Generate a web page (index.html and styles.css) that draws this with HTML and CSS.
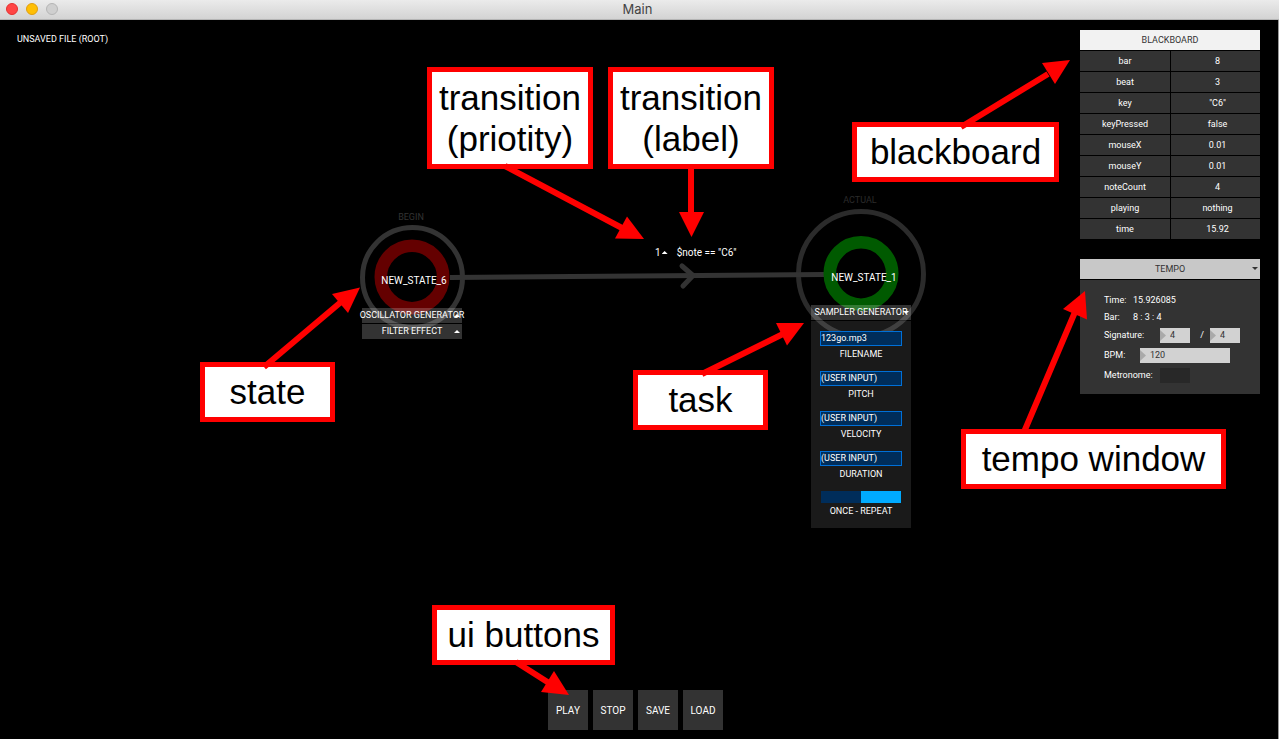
FILE: index.html
```html
<!DOCTYPE html>
<html lang="en">
<head>
<meta charset="utf-8">
<title>Main</title>
<link rel="stylesheet" href="styles.css">
</head>
<body>
<header class="titlebar">
  <div class="lights">
    <button class="light light-close" aria-label="Close"></button>
    <button class="light light-minimize" aria-label="Minimize"></button>
    <button class="light light-zoom" aria-label="Zoom"></button>
  </div>
  <h1 class="window-title">Main</h1>
</header>

<svg class="layer graph" aria-hidden="true">
  <circle cx="412.5" cy="277.5" r="50" fill="none" stroke="#333" stroke-width="5"/>
  <circle cx="861" cy="274" r="62.5" fill="none" stroke="#2b2b2b" stroke-width="5"/>
  <path d="M450 277.5L824 274.5" stroke="#333" stroke-width="5"/>
  <path d="M682 266L693 275.500L683 286" fill="none" stroke="#333" stroke-width="5" stroke-linecap="round" stroke-linejoin="round"/>
  <circle cx="412" cy="277" r="31.2" fill="none" stroke="#640000" stroke-width="12.600"/>
  <circle cx="861" cy="273.500" r="31.2" fill="none" stroke="#005a00" stroke-width="12.600"/>
</svg>

<main class="workspace">
  <div class="top">
    <p class="file-name">UNSAVED FILE (ROOT)</p>
    <aside class="sidebar">
      <section class="blackboard">
        <h2 class="panel-title panel-title-light">BLACKBOARD</h2>
        <table class="variables">
          <tbody>
            <tr><th scope="row">bar</th><td>8</td></tr>
            <tr><th scope="row">beat</th><td>3</td></tr>
            <tr><th scope="row">key</th><td>"C6"</td></tr>
            <tr><th scope="row">keyPressed</th><td>false</td></tr>
            <tr><th scope="row">mouseX</th><td>0.01</td></tr>
            <tr><th scope="row">mouseY</th><td>0.01</td></tr>
            <tr><th scope="row">noteCount</th><td>4</td></tr>
            <tr><th scope="row">playing</th><td>nothing</td></tr>
            <tr><th scope="row">time</th><td>15.92</td></tr>
          </tbody>
        </table>
      </section>
      <section class="tempo">
        <button class="panel-title panel-title-gray" aria-expanded="true">TEMPO<span class="caret caret-down caret-dark"></span></button>
        <div class="tempo-body">
          <dl class="readout">
            <dt>Time:</dt><dd>15.926085</dd>
            <dt>Bar:</dt><dd>8 : 3 : 4</dd>
          </dl>
          <div class="field">
            <label class="label-wide" for="beats">Signature:</label>
            <span class="number"><input id="beats" type="text" value="4"></span>
            <span class="slash">/</span>
            <span class="number"><input type="text" value="4" aria-label="Beat unit"></span>
          </div>
          <div class="field">
            <label class="label-short" for="bpm">BPM:</label>
            <span class="number number-wide"><input id="bpm" type="text" value="120"></span>
          </div>
          <div class="field">
            <label class="label-wide" for="metronome">Metronome:</label>
            <input class="metronome" id="metronome" type="checkbox">
          </div>
        </div>
      </section>
    </aside>
  </div>
  <nav class="toolbar">
    <button class="tool">PLAY</button>
    <button class="tool">STOP</button>
    <button class="tool">SAVE</button>
    <button class="tool">LOAD</button>
  </nav>
</main>

<span class="tag tag-begin">BEGIN</span>
<span class="tag tag-actual">ACTUAL</span>
<span class="state-name state-six">NEW_STATE_6</span>
<span class="state-name state-one">NEW_STATE_1</span>
<div class="transition">
  <button class="priority">1<span class="caret caret-up"></span></button>
  <span>$note == "C6"</span>
</div>

<div class="tasks tasks-six">
  <button class="task-title"><span>OSCILLATOR GENERATOR</span><span class="caret caret-up"></span></button>
  <button class="task-title"><span>FILTER EFFECT</span><span class="caret caret-up"></span></button>
</div>
<div class="tasks tasks-one">
  <button class="task-title" aria-expanded="true"><span>SAMPLER GENERATOR</span><span class="caret caret-down"></span></button>
  <div class="task-body">
    <div class="param"><input id="filename" type="text" value="123go.mp3"><label for="filename">FILENAME</label></div>
    <div class="param"><input id="pitch" type="text" value="(USER INPUT)"><label for="pitch">PITCH</label></div>
    <div class="param"><input id="velocity" type="text" value="(USER INPUT)"><label for="velocity">VELOCITY</label></div>
    <div class="param"><input id="duration" type="text" value="(USER INPUT)"><label for="duration">DURATION</label></div>
    <div class="param"><input class="repeat" id="repeat" type="checkbox" checked><label for="repeat">ONCE - REPEAT</label></div>
  </div>
</div>

<div class="note note-tall note-priority">transition<br>(priotity)</div>
<div class="note note-tall note-label">transition<br>(label)</div>
<div class="note note-blackboard">blackboard</div>
<div class="note note-state">state</div>
<div class="note note-task">task</div>
<div class="note note-tempo">tempo window</div>
<div class="note note-buttons">ui buttons</div>

<svg class="layer arrows" aria-hidden="true">
  <g stroke="#f00" stroke-width="6">
    <path d="M505 166L622 228M691 166V213M264 367L341 302M702 374L783 334M961 127L1048 74M1024 432L1075 312M516 662L549 683"/>
  </g>
  <g fill="#f00">
    <path d="M644 239L627 216.500L615 238.500Z"/>
    <path d="M691.500 237L679 212H704Z"/>
    <path d="M360 287.500L332 294L348 313Z"/>
    <path d="M804 323H776L787 345.500Z"/>
    <path d="M1070 60L1042 63L1055 84Z"/>
    <path d="M1085 291L1063 309L1087 319.500Z"/>
    <path d="M569 695L554 671L541 692Z"/>
  </g>
</svg>
</body>
</html>
```
FILE: styles.css
```css
* { box-sizing: border-box; }

body {
  position: relative;
  display: flex;
  flex-direction: column;
  min-height: 100vh;
  margin: 0;
  overflow: hidden;
  background: #000;
  color: #fff;
  font: 9px/15px Roboto, sans-serif;
}

button, input {
  margin: 0;
  padding: 0;
  border: 0;
  border-radius: 0;
  background: none;
  color: inherit;
  font: inherit;
}

h1, h2, p, dl, dd { margin: 0; font: inherit; }

.titlebar {
  display: grid;
  grid-template-columns: 1fr auto 1fr;
  align-items: center;
  height: 20px;
  padding: 0 10px 2px 6px;
  border-bottom: 1px solid #b4b4b4;
  background: linear-gradient(#ebebeb, #d3d3d3);
}
.lights { display: flex; gap: 8px; }
.light { width: 12px; height: 12px; border: 1px solid; border-radius: 50%; }
.light-close { background: #ff4545; border-color: #e5302f; }
.light-minimize { background: #ffbf05; border-color: #e09e10; }
.light-zoom { background: #cfcfcf; border-color: #b5b5b5; }
.window-title { color: #444; font: 13px/16px Inter, sans-serif; }

.layer { position: absolute; inset: 0; width: 100%; height: 100%; pointer-events: none; }

.workspace {
  flex: 1;
  display: flex;
  flex-direction: column;
  justify-content: space-between;
  padding: 10px 18px 9px 17px;
  border-right: 1px solid #999;
}
.top { display: flex; justify-content: space-between; align-items: flex-start; }
.file-name { padding-top: 2px; }

.sidebar { display: flex; flex-direction: column; gap: 20px; width: 180px; }
.panel-title {
  position: relative;
  display: block;
  width: 100%;
  height: 20px;
  padding-top: 1px;
  line-height: 19px;
  text-align: center;
  color: #333;
}
.panel-title-light { background: #f2f2f2; }
.panel-title-gray { background: #c8c8c8; }

.variables { width: 100%; border-collapse: separate; border-spacing: 0; table-layout: fixed; }
.variables th, .variables td {
  height: 21px;
  padding: 1px 0 0;
  border-top: 1px solid #000;
  background: #333;
  font-weight: normal;
  text-align: center;
}
.variables td { border-left: 1px solid #000; padding-left: 4px; }

.caret { display: block; width: 6px; height: 3px; background: currentColor; }
.caret-up { clip-path: polygon(50% 0, 100% 100%, 0 100%); }
.caret-down { clip-path: polygon(0 0, 100% 0, 50% 100%); }
.caret-dark { position: absolute; right: 2px; top: 8px; }

.tempo-body {
  display: flex;
  flex-direction: column;
  gap: 5px;
  margin-top: 1px;
  padding: 13px 20px 11px 24px;
  background: #333;
}
.readout { display: grid; grid-template-columns: 29px auto; row-gap: 2px; margin-bottom: -2px; }
.field { display: flex; height: 15px; }
.label-wide { width: 56px; }
.label-short { width: 36px; }
.slash { width: 20px; padding-left: 4px; text-align: center; }
.number { position: relative; width: 30px; background: #d2d2d2; color: #333; }
.number::before {
  content: "";
  position: absolute;
  left: 0;
  top: 2px;
  width: 6px;
  height: 11px;
  background: #aaa;
  clip-path: polygon(0 0, 100% 50%, 0 100%);
}
.number-wide { width: 90px; }
.number input { display: block; width: 100%; height: 15px; padding-left: 10px; }
.metronome { appearance: none; width: 30px; background: #282828; }

.toolbar { display: flex; justify-content: center; gap: 5px; padding-right: 6px; }
.tool { width: 40px; height: 40px; background: #333; font-size: 10px; text-align: center; }

.tag, .state-name { position: absolute; width: 100px; text-align: center; white-space: nowrap; }
.tag-begin { left: 361px; top: 210px; color: #333; }
.tag-actual { left: 810px; top: 193px; color: #2b2b2b; }
.state-name { font-size: 10px; }
.state-six { left: 364px; top: 273px; }
.state-one { left: 814px; top: 270px; }

.transition {
  position: absolute;
  left: 655px;
  top: 245px;
  display: flex;
  gap: 9px;
  font-size: 10px;
  white-space: nowrap;
}
.priority { display: flex; align-items: center; gap: 1px; }

.tasks { position: absolute; display: flex; flex-direction: column; gap: 1px; width: 100px; }
.tasks-six { left: 362px; top: 308px; }
.tasks-one { left: 811px; top: 305px; }
.task-title {
  position: relative;
  display: flex;
  justify-content: center;
  height: 15px;
  background: rgba(255, 255, 255, .2);
  white-space: nowrap;
}
.task-title .caret { position: absolute; right: 2px; top: 6px; }
.task-body {
  display: flex;
  flex-direction: column;
  gap: 9px;
  padding: 10px 9px 9px;
  background: rgba(255, 255, 255, .1);
}
.param { display: flex; flex-direction: column; gap: 1px; text-align: center; }
.param input[type="text"] {
  width: 100%;
  height: 15px;
  border: 1px solid #0070d8;
  background: #002d5a;
}
.param .repeat {
  appearance: none;
  height: 12px;
  margin: 0 1px;
  background: linear-gradient(90deg, #002d5a 50%, #00aaff 50%);
}

.note {
  position: absolute;
  padding: 4px 0 5px;
  border: 5px solid #f00;
  background: #fff;
  color: #000;
  font: 35px/41px "Liberation Sans", Arial, sans-serif;
  text-align: center;
  white-space: nowrap;
}
.note-tall { padding: 5px 0; }
.note-priority { left: 427px; top: 67px; width: 166px; }
.note-label { left: 608px; top: 67px; width: 166px; }
.note-blackboard { left: 852px; top: 122px; width: 207px; }
.note-state { left: 200px; top: 362px; width: 135px; }
.note-task { left: 633px; top: 370px; width: 135px; }
.note-tempo { left: 961px; top: 429px; width: 265px; }
.note-buttons { left: 432px; top: 605px; width: 183px; }
```
